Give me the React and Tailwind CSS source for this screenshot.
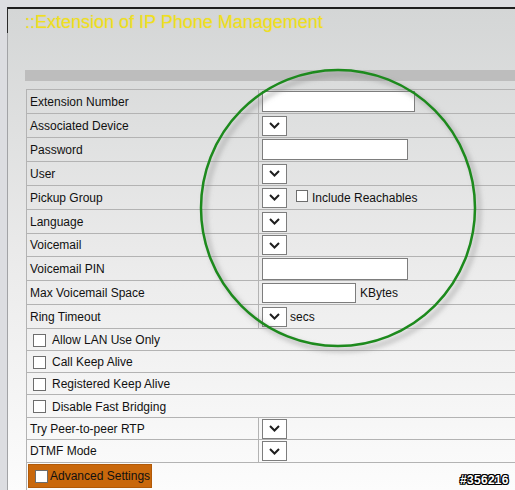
import React from "react";

const Chevron = () => (
  <svg width="11" height="7" viewBox="0 0 11 7" className="block">
    <polyline points="1,1 5.5,5.5 10,1" fill="none" stroke="#1f1f1f" strokeWidth="2" />
  </svg>
);

const Select = () => (
  <div className="w-[25px] h-[20px] bg-white border border-[#7d7d7d] flex items-center justify-center shrink-0">
    <Chevron />
  </div>
);

const Check = ({ cls = "w-[13px] h-[13px]" }) => (
  <div className={`${cls} bg-white border border-[#6d6d6d] shrink-0`} />
);

const Input = ({ w, h = "h-[21px]" }) => (
  <div className={`${w} ${h} bg-white border border-[#7d7d7d] shrink-0`} />
);

const Row = ({ label, h = "h-[24px]", children }) => (
  <div className={`flex ${h} border-b border-[#b3b3b3]`}>
    <div className="w-[232px] shrink-0 border-r border-[#b3b3b3] pl-[3px] flex items-center">
      {label}
    </div>
    <div className="flex-1 pl-[3px] flex items-center">{children}</div>
  </div>
);

const CheckRow = ({ label, h = "h-[22px]" }) => (
  <div className={`flex ${h} border-b border-[#b3b3b3] items-center pl-[6px] gap-[6px] pt-[1px]`}>
    <Check />
    <span>{label}</span>
  </div>
);

export default function App() {
  return (
    <div className="relative w-[515px] h-[490px] overflow-hidden bg-[#dcdde1] pt-[7px] pl-[7px] font-['Liberation_Sans',Arial,sans-serif] text-[12px] text-[#111111]">
      <div className="h-[483px] border-t-2 border-l border-t-[#1e1e1e] border-l-[#a2a3a6] bg-gradient-to-b from-[#d4d6d6] via-[#eaeaea] to-[#fcfcfc]">
        <div className="pl-[17px] pt-[2px]">
          <div className="h-[22px] text-[18px] leading-[22px] text-[#f0e01e] [text-shadow:0_0_1px_rgba(200,180,0,0.4)]">
            ::Extension of IP Phone Management
          </div>
          <div className="mt-[37px] h-[11px] bg-[#bdbdbd]" />
          <div className="mt-[8px] ml-[1px] border-t border-l border-[#b3b3b3]">
            <Row label="Extension Number">
              <Input w="w-[153px]" />
            </Row>
            <Row label="Associated Device">
              <Select />
            </Row>
            <Row label="Password">
              <Input w="w-[146px]" />
            </Row>
            <Row label="User">
              <Select />
            </Row>
            <Row label="Pickup Group">
              <Select />
              <div className="ml-[9px] mt-[-4px]">
                <Check cls="w-[12px] h-[12px]" />
              </div>
              <span className="ml-[4px]">Include Reachables</span>
            </Row>
            <Row label="Language">
              <Select />
            </Row>
            <Row label="Voicemail" h="h-[23px]">
              <Select />
            </Row>
            <Row label="Voicemail PIN">
              <Input w="w-[146px]" h="h-[22px]" />
            </Row>
            <Row label="Max Voicemail Space">
              <Input w="w-[94px]" h="h-[20px]" />
              <span className="ml-[4px]">KBytes</span>
            </Row>
            <Row label="Ring Timeout">
              <Select />
              <span className="ml-[3px]">secs</span>
            </Row>
            <CheckRow label="Allow LAN Use Only" />
            <CheckRow label="Call Keep Alive" />
            <CheckRow label="Registered Keep Alive" />
            <CheckRow label="Disable Fast Bridging" h="h-[23px]" />
            <Row label="Try Peer-to-peer RTP" h="h-[22px]">
              <Select />
            </Row>
            <Row label="DTMF Mode" h="h-[23px]">
              <Select />
            </Row>
            <div className="h-[30px] pl-[1px] pt-[1px] flex items-start">
              <div className="h-[24px] bg-[#c9680c] border border-[#b25a08] flex items-center pl-[6px] pr-[1px] gap-[2px] whitespace-nowrap">
                <Check cls="w-[13px] h-[13px]" />
                <span>Advanced Settings</span>
              </div>
            </div>
          </div>
        </div>
      </div>

      {/* dark top part of left frame line */}
      <div className="absolute left-[7px] top-[7px] w-[1px] h-[26px] bg-[#2a2a2a]" />

      {/* hand-drawn green circle annotation */}
      <svg className="absolute left-0 top-0 pointer-events-none" width="515" height="490">
        <defs>
          <filter id="blur" x="-20%" y="-20%" width="140%" height="140%">
            <feGaussianBlur stdDeviation="2.5" />
          </filter>
        </defs>
        <ellipse cx="342" cy="212" rx="137" ry="138" fill="none" stroke="#8a8a8a" strokeOpacity="0.5" strokeWidth="4" filter="url(#blur)" />
        <ellipse cx="338" cy="208" rx="137" ry="138" fill="none" stroke="#1d8a1d" strokeWidth="2.5" />
      </svg>

      <div className="absolute left-[460px] top-[471px] text-[12px] font-bold text-white tracking-[0.3px] [text-shadow:1px_0_0_#000,-1px_0_0_#000,0_1px_0_#000,0_-1px_0_#000,1px_1px_0_#000,-1px_-1px_0_#000,1px_-1px_0_#000,-1px_1px_0_#000]">
        #356216
      </div>
    </div>
  );
}
